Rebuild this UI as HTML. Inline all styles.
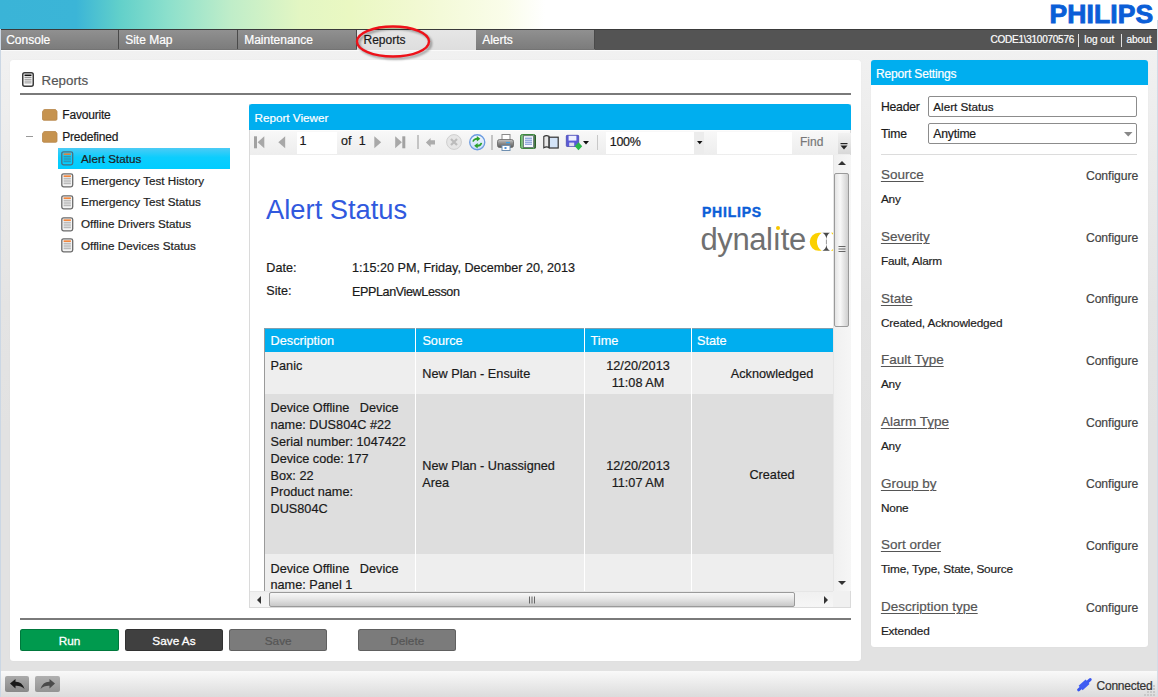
<!DOCTYPE html>
<html><head><meta charset="utf-8"><style>
*{margin:0;padding:0;box-sizing:border-box}
html,body{width:1158px;height:697px;overflow:hidden;font-family:"Liberation Sans",sans-serif;}
body{position:relative;background:linear-gradient(#f1f1f1 50px,#ebebeb 155px,#e4e4e4 305px,#e2e2e2 430px,#e2e2e2 670px);}
.a{position:absolute;white-space:nowrap;-webkit-text-stroke:0.2px currentColor}
svg{position:absolute;overflow:visible}
</style></head><body>
<div class="a" style="left:0px;top:0px;width:1158px;height:29px;background:linear-gradient(90deg,#3ab4d7 0px,#3bb5d7 76px,#62d0ca 120px,#8de0cc 169px,#bfedc9 230px,#e3f6c3 300px,#eaf8c2 350px,#f2f9d3 420px,#fafdea 505px,#ffffff 545px)"></div>
<div class="a " style="left:1049.5px;top:0.97px;font-size:26.5px;line-height:26.5px;color:#0b5ed7;font-weight:bold;letter-spacing:0.1px;-webkit-text-stroke:0.9px #0b5ed7">PHILIPS</div>
<div class="a" style="left:0px;top:29px;width:1158px;height:21px;background:#545454;border-top:1px solid #3a3a3a"></div>
<div class="a" style="left:0px;top:30px;width:119px;height:20px;background:linear-gradient(#909090,#7b7b7b);border-right:1px solid #4a4a4a"></div>
<div class="a " style="left:6.2px;top:33.54px;font-size:12px;line-height:12px;color:#ffffff;">Console</div>
<div class="a" style="left:119px;top:30px;width:119px;height:20px;background:linear-gradient(#909090,#7b7b7b);border-right:1px solid #4a4a4a"></div>
<div class="a " style="left:125.2px;top:33.54px;font-size:12px;line-height:12px;color:#ffffff;">Site Map</div>
<div class="a" style="left:238px;top:30px;width:119px;height:20px;background:linear-gradient(#909090,#7b7b7b);border-right:1px solid #4a4a4a"></div>
<div class="a " style="left:244.2px;top:33.54px;font-size:12px;line-height:12px;color:#ffffff;">Maintenance</div>
<div class="a" style="left:357px;top:30px;width:119px;height:20px;background:linear-gradient(#e6e6e6,#dedede)"></div>
<div class="a " style="left:363.5px;top:33.54px;font-size:12px;line-height:12px;color:#1a1a1a;">Reports</div>
<div class="a" style="left:476px;top:30px;width:119px;height:20px;background:linear-gradient(#909090,#7b7b7b);border-right:1px solid #4a4a4a"></div>
<div class="a " style="left:482.2px;top:33.54px;font-size:12px;line-height:12px;color:#ffffff;">Alerts</div>
<div class="a" style="left:0px;top:49px;width:357px;height:1px;background:#747474"></div>
<div class="a" style="left:476px;top:49px;width:119px;height:1px;background:#747474"></div>
<div class="a " style="left:990.5px;top:34.94px;font-size:10px;line-height:10px;color:#fff;letter-spacing:-0.25px">CODE1\310070576</div>
<div class="a" style="left:1078px;top:34px;width:1px;height:13px;background:#e0e0e0"></div>
<div class="a " style="left:1084.2px;top:34.94px;font-size:10px;line-height:10px;color:#fff;">log out</div>
<div class="a" style="left:1121px;top:34px;width:1px;height:13px;background:#e0e0e0"></div>
<div class="a " style="left:1126.4px;top:34.94px;font-size:10px;line-height:10px;color:#fff;">about</div>
<div class="a" style="left:0px;top:50px;width:1158px;height:1px;background:#fafafa"></div>
<div class="a" style="left:10px;top:60px;width:851px;height:601px;background:#fff;border-radius:3px;box-shadow:0 0 1px rgba(0,0,0,0.08)"></div>
<div class="a" style="left:871px;top:60px;width:277px;height:587px;background:#fff;border-radius:3px;box-shadow:0 0 1px rgba(0,0,0,0.08)"></div>
<svg style="left:22px;top:72px" width="12" height="15" viewBox="0 0 12 15"><rect x="0.75" y="0.75" width="10.5" height="13.5" rx="2" fill="#fafafa" stroke="#3a3a3a" stroke-width="1.5"/><rect x="2.5" y="2.5" width="7" height="1.6" fill="#111"/><g stroke="#888" stroke-width="0.9"><line x1="2.5" y1="5.5" x2="9.5" y2="5.5"/><line x1="2.5" y1="7.3" x2="9.5" y2="7.3"/><line x1="2.5" y1="9.1" x2="9.5" y2="9.1"/><line x1="2.5" y1="10.9" x2="9.5" y2="10.9"/></g></svg>
<div class="a " style="left:41.6px;top:73.74px;font-size:13.3px;line-height:13.3px;color:#555;">Reports</div>
<div class="a" style="left:20px;top:93px;width:831px;height:2px;background:#7a7a7a"></div>
<svg style="left:41.5px;top:109px" width="16" height="12" viewBox="0 0 16 12"><path d="M1.5 1.2 Q1.5 0.5 2.5 0.5 L13 0.5 Q14 0.5 14.5 1.5 L15 2.5 L15 10 Q15 11.3 13.8 11.3 L2 11.3 Q0.5 11.3 0.5 10 L0.5 2.5 Z" fill="#c6934f" stroke="#b8864a" stroke-width="0.8"/></svg>
<div class="a " style="left:62.3px;top:109.14px;font-size:12px;line-height:12px;color:#1a1a1a;letter-spacing:-0.2px">Favourite</div>
<div class="a" style="left:26px;top:136px;width:7px;height:1px;background:#999"></div>
<svg style="left:41.5px;top:131px" width="16" height="12" viewBox="0 0 16 12"><path d="M1.5 1.2 Q1.5 0.5 2.5 0.5 L13 0.5 Q14 0.5 14.5 1.5 L15 2.5 L15 10 Q15 11.3 13.8 11.3 L2 11.3 Q0.5 11.3 0.5 10 L0.5 2.5 Z" fill="#c6934f" stroke="#b8864a" stroke-width="0.8"/></svg>
<div class="a " style="left:62.2px;top:130.74px;font-size:12px;line-height:12px;color:#1a1a1a;letter-spacing:-0.2px">Predefined</div>
<div class="a" style="left:58px;top:148px;width:171.5px;height:20.7px;background:linear-gradient(#4ccbf5,#0ccdfd 45%,#00cdff)"></div>
<svg style="left:61.3px;top:151.20000000000002px" width="13" height="15" viewBox="0 0 13 15"><rect x="0.8" y="0.8" width="10.9" height="13" rx="1.8" fill="none" stroke="#4a6f80" stroke-width="1.3"/><rect x="2.6" y="2.4" width="7.3" height="1.5" fill="#f07a2a"/><g stroke="#3a7a90" stroke-width="0.8"><line x1="2.6" y1="5.3" x2="9.9" y2="5.3"/><line x1="2.6" y1="7.1" x2="9.9" y2="7.1"/><line x1="2.6" y1="8.9" x2="9.9" y2="8.9"/><line x1="2.6" y1="10.7" x2="9.9" y2="10.7"/></g></svg>
<div class="a " style="left:81px;top:152.90px;font-size:11.7px;line-height:11.7px;color:#1e1e1e;">Alert Status</div>
<svg style="left:61.3px;top:172.8px" width="13" height="15" viewBox="0 0 13 15"><rect x="0.8" y="0.8" width="10.9" height="13" rx="1.8" fill="#f4f4f4" stroke="#6a6a6a" stroke-width="1.3"/><rect x="2.6" y="2.4" width="7.3" height="1.5" fill="#f07a2a"/><g stroke="#9a9a9a" stroke-width="0.8"><line x1="2.6" y1="5.3" x2="9.9" y2="5.3"/><line x1="2.6" y1="7.1" x2="9.9" y2="7.1"/><line x1="2.6" y1="8.9" x2="9.9" y2="8.9"/><line x1="2.6" y1="10.7" x2="9.9" y2="10.7"/></g></svg>
<div class="a " style="left:81px;top:174.50px;font-size:11.7px;line-height:11.7px;color:#1e1e1e;">Emergency Test History</div>
<svg style="left:61.3px;top:194.70000000000002px" width="13" height="15" viewBox="0 0 13 15"><rect x="0.8" y="0.8" width="10.9" height="13" rx="1.8" fill="#f4f4f4" stroke="#6a6a6a" stroke-width="1.3"/><rect x="2.6" y="2.4" width="7.3" height="1.5" fill="#f07a2a"/><g stroke="#9a9a9a" stroke-width="0.8"><line x1="2.6" y1="5.3" x2="9.9" y2="5.3"/><line x1="2.6" y1="7.1" x2="9.9" y2="7.1"/><line x1="2.6" y1="8.9" x2="9.9" y2="8.9"/><line x1="2.6" y1="10.7" x2="9.9" y2="10.7"/></g></svg>
<div class="a " style="left:81px;top:196.40px;font-size:11.7px;line-height:11.7px;color:#1e1e1e;">Emergency Test Status</div>
<svg style="left:61.3px;top:216.6px" width="13" height="15" viewBox="0 0 13 15"><rect x="0.8" y="0.8" width="10.9" height="13" rx="1.8" fill="#f4f4f4" stroke="#6a6a6a" stroke-width="1.3"/><rect x="2.6" y="2.4" width="7.3" height="1.5" fill="#f07a2a"/><g stroke="#9a9a9a" stroke-width="0.8"><line x1="2.6" y1="5.3" x2="9.9" y2="5.3"/><line x1="2.6" y1="7.1" x2="9.9" y2="7.1"/><line x1="2.6" y1="8.9" x2="9.9" y2="8.9"/><line x1="2.6" y1="10.7" x2="9.9" y2="10.7"/></g></svg>
<div class="a " style="left:81px;top:218.30px;font-size:11.7px;line-height:11.7px;color:#1e1e1e;">Offline Drivers Status</div>
<svg style="left:61.3px;top:238.20000000000002px" width="13" height="15" viewBox="0 0 13 15"><rect x="0.8" y="0.8" width="10.9" height="13" rx="1.8" fill="#f4f4f4" stroke="#6a6a6a" stroke-width="1.3"/><rect x="2.6" y="2.4" width="7.3" height="1.5" fill="#f07a2a"/><g stroke="#9a9a9a" stroke-width="0.8"><line x1="2.6" y1="5.3" x2="9.9" y2="5.3"/><line x1="2.6" y1="7.1" x2="9.9" y2="7.1"/><line x1="2.6" y1="8.9" x2="9.9" y2="8.9"/><line x1="2.6" y1="10.7" x2="9.9" y2="10.7"/></g></svg>
<div class="a " style="left:81px;top:239.90px;font-size:11.7px;line-height:11.7px;color:#1e1e1e;">Offline Devices Status</div>
<div class="a" style="left:249px;top:104px;width:602px;height:504px;background:#fff;border:1px solid #dadada;border-top:none"></div>
<div class="a" style="left:249px;top:104px;width:602px;height:26px;background:#00aeef;border-radius:3px 3px 0 0"></div>
<div class="a " style="left:254.5px;top:112.20px;font-size:11.7px;line-height:11.7px;color:#fff;">Report Viewer</div>
<div class="a" style="left:250px;top:130px;width:600px;height:25px;background:linear-gradient(#f8f8f8,#ededed);border-top:1px solid #fdfdfd"></div>
<svg style="left:254px;top:135.5px" width="12" height="13" viewBox="0 0 12 13"><rect x="0" y="0.3" width="3" height="12" fill="#a2a2a2"/><path d="M10.3 0.2 L10.3 12.3 L3.6 6.2 Z" fill="#a8a8a8"/></svg>
<svg style="left:278px;top:135.5px" width="8" height="13" viewBox="0 0 8 13"><path d="M7.2 0.2 L7.2 12.3 L0.3 6.2 Z" fill="#a8a8a8"/></svg>
<div class="a" style="left:297px;top:131.7px;width:39.6px;height:22px;background:#fff"></div>
<div class="a " style="left:299.6px;top:135.32px;font-size:12.5px;line-height:12.5px;color:#1a1a1a;">1</div>
<div class="a " style="left:341px;top:135.32px;font-size:12.5px;line-height:12.5px;color:#1a1a1a;">of</div>
<div class="a " style="left:358.7px;top:135.32px;font-size:12.5px;line-height:12.5px;color:#1a1a1a;">1</div>
<svg style="left:374px;top:135.5px" width="8" height="13" viewBox="0 0 8 13"><path d="M0.3 0.2 L0.3 12.3 L7.2 6.2 Z" fill="#a8a8a8"/></svg>
<svg style="left:395px;top:135.5px" width="11" height="13" viewBox="0 0 11 13"><path d="M0.2 0.2 L0.2 12.3 L6.9 6.2 Z" fill="#a8a8a8"/><rect x="7.3" y="0.3" width="3" height="12" fill="#a2a2a2"/></svg>
<div class="a" style="left:417px;top:135px;width:1.5px;height:14px;background:#c4c4c4"></div>
<svg style="left:425px;top:137px" width="11" height="11" viewBox="0 0 11 11"><path d="M0.9 5.5 L5.6 0.9 L5.6 3.2 L10 3.2 L10 7.6 L5.6 7.6 L5.6 10 Z" fill="#acacac"/></svg>
<svg style="left:446px;top:134px" width="16" height="16" viewBox="0 0 16 16"><circle cx="8" cy="8" r="7.4" fill="#e6e6e6" stroke="#cfcfcf" stroke-width="1"/><path d="M5 5 L11 11 M11 5 L5 11" stroke="#bcbcbc" stroke-width="2.2"/></svg>
<svg style="left:468.5px;top:134px" width="16.5" height="16.5" viewBox="0 0 16 16"><defs><linearGradient id="rg" x1="0" y1="0" x2="0" y2="1"><stop offset="0" stop-color="#f4f8fd"/><stop offset="1" stop-color="#c9defa"/></linearGradient></defs><circle cx="8" cy="8" r="7.3" fill="url(#rg)" stroke="#6b9be0" stroke-width="1.3"/><path d="M3.2 7.3 Q4 4 7.6 3.6 L7.6 2 L11 4.7 L7.6 7.3 L7.6 5.6 Q5.3 5.8 4.6 7.6 Z" fill="#2aa02a"/><path d="M12.8 8.7 Q12 12 8.4 12.4 L8.4 14 L5 11.3 L8.4 8.7 L8.4 10.4 Q10.7 10.2 11.4 8.4 Z" fill="#2aa02a"/></svg>
<div class="a" style="left:491px;top:135px;width:1.8px;height:15px;background:#c4c4c4"></div>
<svg style="left:497px;top:133.5px" width="18" height="17" viewBox="0 0 18 17"><defs><linearGradient id="pg" x1="0" y1="0" x2="0" y2="1"><stop offset="0" stop-color="#c9c9c9"/><stop offset="0.5" stop-color="#8a8a8a"/><stop offset="1" stop-color="#5a5a5a"/></linearGradient></defs><rect x="5" y="0.5" width="8" height="6" fill="#fff" stroke="#8a8a8a" stroke-width="1"/><rect x="0.5" y="5.5" width="16" height="8" rx="2" fill="url(#pg)" stroke="#666" stroke-width="0.8"/><rect x="9" y="8" width="4" height="1.3" fill="#3aa0e8"/><rect x="5" y="11.5" width="8" height="5" fill="#fff" stroke="#6f8fb0" stroke-width="1"/><rect x="7.5" y="13" width="2" height="2" fill="#4a90d8"/></svg>
<svg style="left:520px;top:134px" width="17" height="15" viewBox="0 0 17 15"><rect x="0.5" y="0.5" width="15" height="14" rx="1.8" fill="#7cbf7c" stroke="#3d8a3d" stroke-width="1"/><rect x="3.5" y="1.8" width="10" height="11.5" fill="#f7faff" stroke="#445" stroke-width="0.6"/><g stroke="#5a7ac8" stroke-width="0.9"><line x1="5" y1="4.2" x2="12" y2="4.2"/><line x1="5" y1="6.2" x2="12" y2="6.2"/><line x1="5" y1="8.2" x2="12" y2="8.2"/><line x1="5" y1="10.2" x2="12" y2="10.2"/></g><rect x="14.3" y="1" width="1.5" height="13.5" fill="#1f3f1f" opacity="0.7"/></svg>
<svg style="left:542.5px;top:135px" width="16" height="14" viewBox="0 0 16 14"><path d="M0.8 1.5 Q3 0 6 1.2 L6 12.5 Q3.5 11 0.8 12.8 Z" fill="#e8e8e8" stroke="#333" stroke-width="1.1"/><rect x="6.2" y="2.2" width="9" height="10.8" fill="#d4e4f8" stroke="#333" stroke-width="1.2"/></svg>
<svg style="left:565.5px;top:135px" width="17" height="16" viewBox="0 0 17 16"><rect x="0.3" y="0.3" width="12.4" height="11.2" rx="0.8" fill="#5a5ad6" stroke="#3c3ca8" stroke-width="0.7"/><rect x="2.6" y="0.8" width="7.8" height="4.8" fill="#eef0ff"/><rect x="3.2" y="7.6" width="5" height="3.6" fill="#dfe0ee"/><path d="M12.5 7.2 L16.2 11.2 L12.5 15.2 L8.8 11.2 Z" fill="#2ab84a"/></svg>
<svg style="left:582.5px;top:141px" width="6" height="4" viewBox="0 0 6 4"><path d="M0 0 L6 0 L3 3.5 Z" fill="#111"/></svg>
<div class="a" style="left:596.5px;top:135px;width:1.5px;height:15px;background:#c8c8c8"></div>
<div class="a" style="left:606.3px;top:131.5px;width:98px;height:22px;background:#fff"></div>
<div class="a" style="left:694px;top:131.5px;width:10.2px;height:22px;background:#ececec"></div>
<svg style="left:696.5px;top:140.5px" width="6" height="4" viewBox="0 0 6 4"><path d="M0 0 L5.5 0 L2.75 3.2 Z" fill="#111"/></svg>
<div class="a " style="left:609.8px;top:135.92px;font-size:12.5px;line-height:12.5px;color:#1a1a1a;letter-spacing:-0.3px">100%</div>
<div class="a" style="left:717px;top:131.5px;width:75px;height:22px;background:#fff"></div>
<div class="a " style="left:800px;top:135.84px;font-size:12px;line-height:12px;color:#777;">Find</div>
<div class="a" style="left:838px;top:132.6px;width:12.5px;height:21px;background:linear-gradient(#f2f2f2,#d8d8d8)"></div>
<svg style="left:840px;top:143px" width="8" height="8" viewBox="0 0 8 8"><rect x="0.5" y="0" width="7" height="1.2" fill="#222"/><path d="M0.5 2.6 L7.5 2.6 L4 6.5 Z" fill="#222"/></svg>
<div class="a" style="left:250px;top:155px;width:583px;height:436px;overflow:hidden;background:#fff">
<div class="a " style="left:16.1px;top:41.29px;font-size:27.3px;line-height:27.3px;color:#3159de;-webkit-text-stroke:0">Alert Status</div>
<div class="a " style="left:451.9px;top:49.55px;font-size:14px;line-height:14px;color:#0b5ed7;font-weight:bold;letter-spacing:0.8px;-webkit-text-stroke:0.4px #0b5ed7">PHILIPS</div>
<div class="a " style="left:450.5px;top:68.96px;font-size:31px;line-height:31px;color:#707070;letter-spacing:-0.4px;-webkit-text-stroke:0">dynal&#305;te</div>
<div class="a" style="left:526.3px;top:71.30000000000001px;width:3.6px;height:3.6px;border-radius:2px;background:#f7c600"></div>
<svg style="left:555px;top:75px" width="40" height="24" viewBox="805 230 40 24"><path d="M821.8 232.8 L818.7 232.8 A9 9 0 0 0 818.7 250.8 L821.8 250.8 A10.7 10.7 0 0 1 821.8 232.8 Z" fill="#fbd000"/><path d="M830.8 232.8 L834 232.8 A9 9 0 0 1 834 250.8 L830.8 250.8 A10.7 10.7 0 0 0 830.8 232.8 Z" fill="#fbd000"/><path d="M822.3 232.8 L830 232.8 Q826.8 234.5 826.4 239.2 Q826 234.5 822.3 232.8 Z" fill="#4a4a4a"/><path d="M822.3 250.8 L830 250.8 Q826.8 249.1 826.4 244.4 Q826 249.1 822.3 250.8 Z" fill="#4a4a4a"/><rect x="825.9" y="239.5" width="1" height="4.8" fill="#999"/></svg>
<div class="a " style="left:16.3px;top:106.63px;font-size:12.6px;line-height:12.6px;color:#1a1a1a;">Date:</div>
<div class="a " style="left:102px;top:106.93px;font-size:12.6px;line-height:12.6px;color:#1a1a1a;">1:15:20 PM, Friday, December 20, 2013</div>
<div class="a " style="left:16.3px;top:129.53px;font-size:12.6px;line-height:12.6px;color:#1a1a1a;">Site:</div>
<div class="a " style="left:102px;top:130.73px;font-size:12.6px;line-height:12.6px;color:#1a1a1a;letter-spacing:-0.4px">EPPLanViewLesson</div>
<div class="a" style="left:14.5px;top:173.4px;width:600px;height:24px;background:#00aeef"></div>
<div class="a" style="left:14.5px;top:197.3px;width:600px;height:41.7px;background:#eeeeee"></div>
<div class="a" style="left:14.5px;top:239px;width:600px;height:160px;background:#dedede"></div>
<div class="a" style="left:14.5px;top:399px;width:600px;height:60px;background:#eeeeee"></div>
<div class="a" style="left:14px;top:173.4px;width:1px;height:300px;background:#9a9a9a"></div>
<div class="a" style="left:14px;top:173px;width:600px;height:1px;background:#7f9fb0"></div>
<div class="a" style="left:165px;top:173.4px;width:1px;height:300px;background:#ffffff"></div>
<div class="a" style="left:334.3px;top:173.4px;width:1px;height:300px;background:#ffffff"></div>
<div class="a" style="left:440.5px;top:173.4px;width:1px;height:300px;background:#ffffff"></div>
<div class="a " style="left:20.6px;top:180.05px;font-size:12.7px;line-height:12.7px;color:#fff;">Description</div>
<div class="a " style="left:172.4px;top:180.05px;font-size:12.7px;line-height:12.7px;color:#fff;">Source</div>
<div class="a " style="left:340.6px;top:180.05px;font-size:12.7px;line-height:12.7px;color:#fff;">Time</div>
<div class="a " style="left:447px;top:180.05px;font-size:12.7px;line-height:12.7px;color:#fff;">State</div>
<div class="a " style="left:20.6px;top:204.85px;font-size:12.7px;line-height:12.7px;color:#1a1a1a;">Panic</div>
<div class="a " style="left:172.3px;top:212.55px;font-size:12.7px;line-height:12.7px;color:#1a1a1a;">New Plan - Ensuite</div>
<div class="a" style="left:335px;top:202.95px;width:106px;text-align:center;font-size:12.7px;line-height:16.7px;color:#1a1a1a">12/20/2013<br>11:08 AM</div>
<div class="a" style="left:441px;top:212.55px;width:162px;text-align:center;font-size:12.7px;line-height:12.7px;color:#1a1a1a">Acknowledged</div>
<div class="a" style="left:20.5px;top:245.40px;font-size:12.7px;line-height:16.8px;color:#1a1a1a">Device Offline &nbsp; Device<br>name: DUS804C #22<br>Serial number: 1047422<br>Device code: 177<br>Box: 22<br>Product name:<br>DUS804C</div>
<div class="a" style="left:172.3px;top:302.90px;font-size:12.7px;line-height:17px;color:#1a1a1a">New Plan - Unassigned<br>Area</div>
<div class="a" style="left:335px;top:303.05px;width:106px;text-align:center;font-size:12.7px;line-height:16.7px;color:#1a1a1a">12/20/2013<br>11:07 AM</div>
<div class="a" style="left:441px;top:314.15px;width:162px;text-align:center;font-size:12.7px;line-height:12.7px;color:#1a1a1a">Created</div>
<div class="a" style="left:20.5px;top:405.60px;font-size:12.7px;line-height:16.6px;color:#1a1a1a">Device Offline &nbsp; Device<br>name: Panel 1</div>
</div>
<div class="a" style="left:833px;top:155px;width:17.5px;height:436px;background:linear-gradient(90deg,#f0f0f0,#f6f6f6);border-left:1px solid #e6e6e6"></div>
<svg style="left:837px;top:160px" width="10" height="6" viewBox="0 0 10 6"><path d="M1 5 L5 1 L9 5 Z" fill="#333"/></svg>
<div class="a" style="left:834.3px;top:173px;width:14.5px;height:154px;background:linear-gradient(90deg,#e4e4e4,#f8f8f8 40%,#cfcfcf);border:1px solid #9a9a9a;border-radius:2px"></div>
<svg style="left:837.5px;top:245px" width="8" height="9" viewBox="0 0 8 9"><g fill="#666"><rect x="0.5" y="1" width="7" height="1"/><rect x="0.5" y="3.5" width="7" height="1"/><rect x="0.5" y="6" width="7" height="1"/></g></svg>
<svg style="left:837px;top:580px" width="10" height="6" viewBox="0 0 10 6"><path d="M1 1 L9 1 L5 5 Z" fill="#333"/></svg>
<div class="a" style="left:250px;top:591px;width:583px;height:16px;background:linear-gradient(#f0f0f0,#f6f6f6);border-top:1px solid #e6e6e6"></div>
<div class="a" style="left:833px;top:591px;width:17px;height:16px;background:#f0f0f0"></div>
<svg style="left:256px;top:595px" width="6" height="10" viewBox="0 0 6 10"><path d="M5 1 L5 9 L1 5 Z" fill="#333"/></svg>
<div class="a" style="left:269px;top:592px;width:526px;height:15px;background:linear-gradient(#f8f8f8,#e6e6e6 45%,#c8c8c8);border:1px solid #9a9a9a;border-radius:2px"></div>
<svg style="left:528px;top:595.5px" width="9" height="8" viewBox="0 0 9 8"><g fill="#666"><rect x="1" y="0.5" width="1" height="7"/><rect x="3.5" y="0.5" width="1" height="7"/><rect x="6" y="0.5" width="1" height="7"/></g></svg>
<svg style="left:823px;top:595px" width="6" height="10" viewBox="0 0 6 10"><path d="M1 1 L1 9 L5 5 Z" fill="#333"/></svg>
<div class="a" style="left:20px;top:618px;width:831px;height:2px;background:#7a7a7a"></div>
<div class="a" style="left:20px;top:629.4px;width:99px;height:21.5px;background:#009a4e;border-radius:2.5px;box-shadow:inset 0 0 0 1px rgba(0,0,0,0.22)"></div>
<div class="a" style="left:20px;top:629.4px;width:99px;height:21.5px;text-align:center;font-size:11.8px;line-height:24px;color:#fff;-webkit-text-stroke:0.3px #fff;">Run</div>
<div class="a" style="left:124.8px;top:629.4px;width:98.4px;height:21.5px;background:#404040;border-radius:2.5px;box-shadow:inset 0 0 0 1px rgba(0,0,0,0.22)"></div>
<div class="a" style="left:124.8px;top:629.4px;width:98.4px;height:21.5px;text-align:center;font-size:11.8px;line-height:24px;color:#fff;-webkit-text-stroke:0.3px #fff;">Save As</div>
<div class="a" style="left:229px;top:629.4px;width:98.4px;height:21.5px;background:#7b7b7b;border-radius:2.5px;box-shadow:inset 0 0 0 1px rgba(0,0,0,0.22)"></div>
<div class="a" style="left:229px;top:629.4px;width:98.4px;height:21.5px;text-align:center;font-size:11.8px;line-height:24px;color:#555;">Save</div>
<div class="a" style="left:358px;top:629.4px;width:98.4px;height:21.5px;background:#7b7b7b;border-radius:2.5px;box-shadow:inset 0 0 0 1px rgba(0,0,0,0.22)"></div>
<div class="a" style="left:358px;top:629.4px;width:98.4px;height:21.5px;text-align:center;font-size:11.8px;line-height:24px;color:#555;">Delete</div>
<div class="a" style="left:871px;top:60px;width:276.5px;height:25px;background:#00aeef;border-radius:3px 3px 0 0"></div>
<div class="a " style="left:876px;top:68.24px;font-size:12px;line-height:12px;color:#fff;letter-spacing:-0.15px">Report Settings</div>
<div class="a " style="left:880.9px;top:100.77px;font-size:12.2px;line-height:12.2px;color:#1a1a1a;letter-spacing:-0.2px">Header</div>
<div class="a" style="left:928px;top:95.9px;width:209.4px;height:21px;background:#fff;border:1px solid #8c8c8c;border-radius:2px"></div>
<div class="a " style="left:933.3px;top:101.20px;font-size:11.7px;line-height:11.7px;color:#1a1a1a;">Alert Status</div>
<div class="a " style="left:880.9px;top:127.87px;font-size:12.2px;line-height:12.2px;color:#1a1a1a;letter-spacing:-0.2px">Time</div>
<div class="a" style="left:928px;top:122.5px;width:209.4px;height:21.3px;background:#fff;border:1px solid #8c8c8c;border-radius:2px"></div>
<div class="a " style="left:933.3px;top:127.87px;font-size:12.2px;line-height:12.2px;color:#1a1a1a;letter-spacing:-0.2px">Anytime</div>
<svg style="left:1123.5px;top:131.5px" width="9" height="5" viewBox="0 0 9 5"><path d="M0 0 L8.5 0 L4.25 4.5 Z" fill="#888"/></svg>
<div class="a" style="left:880.9px;top:154px;width:256.5px;height:1px;background:#dcdcdc"></div>
<div class="a " style="left:880.9px;top:168.37px;font-size:13.5px;line-height:13.5px;color:#555;text-decoration:underline;text-underline-offset:2px;text-decoration-thickness:1px">Source</div>
<div class="a " style="left:1085.9px;top:170.07px;font-size:12.2px;line-height:12.2px;color:#444;letter-spacing:-0.05px">Configure</div>
<div class="a " style="left:880.9px;top:194.21px;font-size:11.8px;line-height:11.8px;color:#1e1e1e;letter-spacing:-0.15px">Any</div>
<div class="a " style="left:880.9px;top:230.04px;font-size:13.5px;line-height:13.5px;color:#555;text-decoration:underline;text-underline-offset:2px;text-decoration-thickness:1px">Severity</div>
<div class="a " style="left:1085.9px;top:231.74px;font-size:12.2px;line-height:12.2px;color:#444;letter-spacing:-0.05px">Configure</div>
<div class="a " style="left:880.9px;top:255.88px;font-size:11.8px;line-height:11.8px;color:#1e1e1e;letter-spacing:-0.15px">Fault, Alarm</div>
<div class="a " style="left:880.9px;top:291.71px;font-size:13.5px;line-height:13.5px;color:#555;text-decoration:underline;text-underline-offset:2px;text-decoration-thickness:1px">State</div>
<div class="a " style="left:1085.9px;top:293.41px;font-size:12.2px;line-height:12.2px;color:#444;letter-spacing:-0.05px">Configure</div>
<div class="a " style="left:880.9px;top:317.55px;font-size:11.8px;line-height:11.8px;color:#1e1e1e;letter-spacing:-0.15px">Created, Acknowledged</div>
<div class="a " style="left:880.9px;top:353.38px;font-size:13.5px;line-height:13.5px;color:#555;text-decoration:underline;text-underline-offset:2px;text-decoration-thickness:1px">Fault Type</div>
<div class="a " style="left:1085.9px;top:355.08px;font-size:12.2px;line-height:12.2px;color:#444;letter-spacing:-0.05px">Configure</div>
<div class="a " style="left:880.9px;top:379.22px;font-size:11.8px;line-height:11.8px;color:#1e1e1e;letter-spacing:-0.15px">Any</div>
<div class="a " style="left:880.9px;top:415.05px;font-size:13.5px;line-height:13.5px;color:#555;text-decoration:underline;text-underline-offset:2px;text-decoration-thickness:1px">Alarm Type</div>
<div class="a " style="left:1085.9px;top:416.75px;font-size:12.2px;line-height:12.2px;color:#444;letter-spacing:-0.05px">Configure</div>
<div class="a " style="left:880.9px;top:440.89px;font-size:11.8px;line-height:11.8px;color:#1e1e1e;letter-spacing:-0.15px">Any</div>
<div class="a " style="left:880.9px;top:476.72px;font-size:13.5px;line-height:13.5px;color:#555;text-decoration:underline;text-underline-offset:2px;text-decoration-thickness:1px">Group by</div>
<div class="a " style="left:1085.9px;top:478.42px;font-size:12.2px;line-height:12.2px;color:#444;letter-spacing:-0.05px">Configure</div>
<div class="a " style="left:880.9px;top:502.56px;font-size:11.8px;line-height:11.8px;color:#1e1e1e;letter-spacing:-0.15px">None</div>
<div class="a " style="left:880.9px;top:538.39px;font-size:13.5px;line-height:13.5px;color:#555;text-decoration:underline;text-underline-offset:2px;text-decoration-thickness:1px">Sort order</div>
<div class="a " style="left:1085.9px;top:540.09px;font-size:12.2px;line-height:12.2px;color:#444;letter-spacing:-0.05px">Configure</div>
<div class="a " style="left:880.9px;top:564.23px;font-size:11.8px;line-height:11.8px;color:#1e1e1e;letter-spacing:-0.15px">Time, Type, State, Source</div>
<div class="a " style="left:880.9px;top:600.06px;font-size:13.5px;line-height:13.5px;color:#555;text-decoration:underline;text-underline-offset:2px;text-decoration-thickness:1px">Description type</div>
<div class="a " style="left:1085.9px;top:601.76px;font-size:12.2px;line-height:12.2px;color:#444;letter-spacing:-0.05px">Configure</div>
<div class="a " style="left:880.9px;top:625.90px;font-size:11.8px;line-height:11.8px;color:#1e1e1e;letter-spacing:-0.15px">Extended</div>
<svg style="left:350px;top:20px" width="90" height="45" viewBox="0 0 90 45"><defs><filter id="bl" x="-20%" y="-40%" width="140%" height="180%"><feGaussianBlur stdDeviation="1.3"/></filter></defs><ellipse cx="45" cy="23.5" rx="36" ry="15" fill="none" stroke="rgba(0,0,0,0.35)" stroke-width="2.5" filter="url(#bl)"/><ellipse cx="43" cy="21.5" rx="36" ry="15" fill="none" stroke="#ee1119" stroke-width="2.4"/></svg>
<div class="a" style="left:0px;top:671px;width:1158px;height:26px;background:linear-gradient(#f9f9f9,#dcdcdc)"></div>
<div class="a" style="left:5.3px;top:676.3px;width:24px;height:16.2px;background:linear-gradient(#aaa,#888);border-radius:2px"></div>
<div class="a" style="left:35.2px;top:676.3px;width:24.4px;height:16.2px;background:linear-gradient(#b0b0b0,#939393);border-radius:2px"></div>
<svg style="left:9px;top:678px" width="17" height="13" viewBox="0 0 17 13"><path d="M1 5.5 L6.5 1 L6.5 3.8 Q13 3.5 15.5 11 Q12 7.5 6.5 7.8 L6.5 10.5 Z" fill="#1a1a1a"/></svg>
<svg style="left:39px;top:678px" width="17" height="13" viewBox="0 0 17 13"><path d="M16 5.5 L10.5 1 L10.5 3.8 Q4 3.5 1.5 11 Q5 7.5 10.5 7.8 L10.5 10.5 Z" fill="#4a4a4a"/></svg>
<svg style="left:1072px;top:674px" width="24" height="23" viewBox="1072 674 24 23"><path d="M1078.6 689.8 L1090.2 679.6" stroke="#3a56ee" stroke-width="3" stroke-linecap="round"/><path d="M1080.6 687.9 L1087.6 681.7" stroke="#3f5cf2" stroke-width="6"/></svg>
<svg style="left:1143px;top:683px" width="14" height="14" viewBox="0 0 14 14"><g fill="#c8c8c8"><rect x="10" y="2" width="2" height="2"/><rect x="7" y="5" width="2" height="2"/><rect x="10" y="5" width="2" height="2"/><rect x="4" y="8" width="2" height="2"/><rect x="7" y="8" width="2" height="2"/><rect x="10" y="8" width="2" height="2"/><rect x="1" y="11" width="2" height="2"/><rect x="4" y="11" width="2" height="2"/><rect x="7" y="11" width="2" height="2"/><rect x="10" y="11" width="2" height="2"/></g></svg>
<div class="a " style="left:1096.6px;top:679.84px;font-size:12px;line-height:12px;color:#333;letter-spacing:-0.25px">Connected</div>
<div class="a" style="left:0px;top:29px;width:1px;height:668px;background:#cbd7e4"></div>
<div class="a" style="left:1156.5px;top:20px;width:1.5px;height:677px;background:#d2dce8"></div>

</body></html>
